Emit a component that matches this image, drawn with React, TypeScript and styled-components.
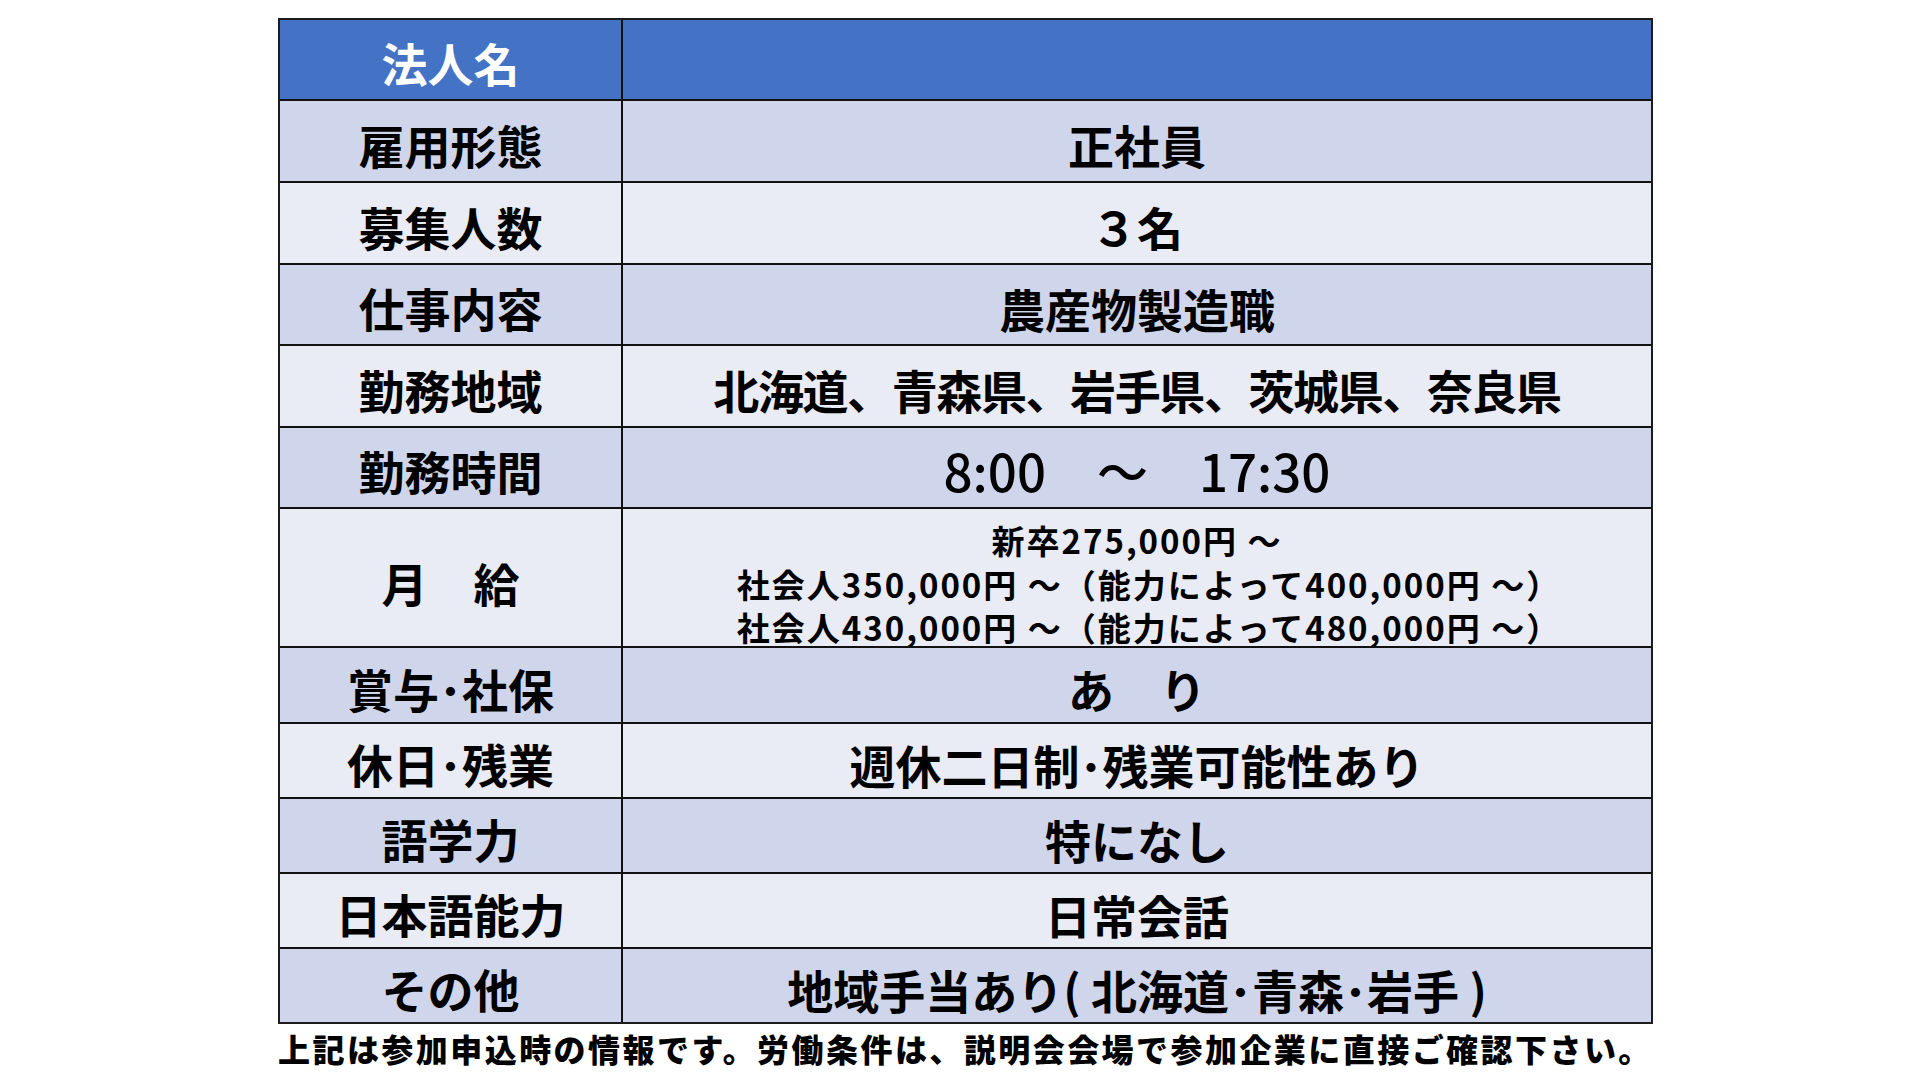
import styled, { createGlobalStyle } from "styled-components";

const GlobalStyle = createGlobalStyle`
  html, body {
    margin: 0;
    padding: 0;
    background: #ffffff;
  }
  body {
    font-family: "Noto Sans CJK JP", "Noto Sans", sans-serif;
    color: #000000;
  }
`;

const Page = styled.div`
  width: 1920px;
  height: 1080px;
  box-sizing: border-box;
  padding: 18px 0 0 278px;
  display: flex;
  flex-direction: column;
`;

const Table = styled.div`
  width: 1375px;
  box-sizing: border-box;
  border: 2px solid #1c1c1c;
  display: flex;
  flex-direction: column;
`;

const Row = styled.div<{ $h: number; $bg: string; $first?: boolean }>`
  display: grid;
  grid-template-columns: 343px 1fr;
  box-sizing: border-box;
  height: ${(p) => p.$h}px;
  background: ${(p) => p.$bg};
  border-top: ${(p) => (p.$first ? "none" : "2px solid #111111")};
`;

const Label = styled.div<{ $light?: boolean }>`
  display: flex;
  align-items: center;
  justify-content: center;
  box-sizing: border-box;
  padding-top: 5px;
  border-right: 2px solid #111111;
  font-size: 46px;
  font-weight: 700;
  line-height: 1;
  white-space: pre;
  color: ${(p) => (p.$light ? "#ffffff" : "#000000")};
`;

const Value = styled.div<{ $size?: number; $weight?: number; $spacing?: number; $pad?: number }>`
  display: flex;
  flex-direction: column;
  align-items: center;
  justify-content: center;
  box-sizing: border-box;
  padding-top: ${(p) => p.$pad ?? 6}px;
  font-size: ${(p) => p.$size ?? 46}px;
  font-weight: ${(p) => p.$weight ?? 700};
  letter-spacing: ${(p) => p.$spacing ?? 0}px;
  line-height: 1;
  white-space: pre;
`;

const SalaryLine = styled.div<{ $shift?: number }>`
  padding-left: ${(p) => p.$shift ?? 0}px;
  font-size: 33px;
  font-weight: 700;
  letter-spacing: 2px;
  line-height: 43.5px;
  white-space: pre;
`;

const Note = styled.div`
  margin-top: 1px;
  font-size: 32px;
  font-weight: 900;
  letter-spacing: 2.45px;
  line-height: 46px;
  white-space: pre;
`;

const BLUE = "#4472c4";
const DARK = "#cfd5ea";
const LIGHT = "#e9ebf5";

type Item = {
  label: string;
  value: string;
  h: number;
  size?: number;
  weight?: number;
  spacing?: number;
};

const rows: Item[] = [
  { label: "雇用形態", value: "正社員", h: 82 },
  { label: "募集人数", value: "３名", h: 82 },
  { label: "仕事内容", value: "農産物製造職", h: 81 },
  { label: "勤務地域", value: "北海道、青森県、岩手県、茨城県、奈良県", h: 82, spacing: -1.4 },
  { label: "勤務時間", value: "8:00　～　17:30", h: 81, size: 51, weight: 500 },
];

const rowsAfter: Item[] = [
  { label: "賞与･社保", value: "あ　り", h: 76 },
  { label: "休日･残業", value: "週休二日制･残業可能性あり", h: 75 },
  { label: "語学力", value: "特になし", h: 75 },
  { label: "日本語能力", value: "日常会話", h: 75 },
  { label: "その他", value: "地域手当あり( 北海道･青森･岩手 )", h: 75 },
];

export default function App() {
  return (
    <>
      <GlobalStyle />
      <Page>
        <Table>
          <Row $h={79} $bg={BLUE} $first>
            <Label $light>法人名</Label>
            <Value />
          </Row>
          {rows.map((r, i) => (
            <Row key={r.label} $h={r.h} $bg={i % 2 === 0 ? DARK : LIGHT}>
              <Label>{r.label}</Label>
              <Value $size={r.size} $weight={r.weight} $spacing={r.spacing}>
                {r.value}
              </Value>
            </Row>
          ))}
          <Row $h={139} $bg={LIGHT}>
            <Label>月　給</Label>
            <Value $pad={10}>
              <SalaryLine>新卒275,000円 ～</SalaryLine>
              <SalaryLine $shift={24}>社会人350,000円 ～（能力によって400,000円 ～）</SalaryLine>
              <SalaryLine $shift={24}>社会人430,000円 ～（能力によって480,000円 ～）</SalaryLine>
            </Value>
          </Row>
          {rowsAfter.map((r, i) => (
            <Row key={r.label} $h={r.h} $bg={i % 2 === 0 ? DARK : LIGHT}>
              <Label>{r.label}</Label>
              <Value $size={r.size} $weight={r.weight} $spacing={r.spacing}>
                {r.value}
              </Value>
            </Row>
          ))}
        </Table>
        <Note>上記は参加申込時の情報です。労働条件は、説明会会場で参加企業に直接ご確認下さい。</Note>
      </Page>
    </>
  );
}
